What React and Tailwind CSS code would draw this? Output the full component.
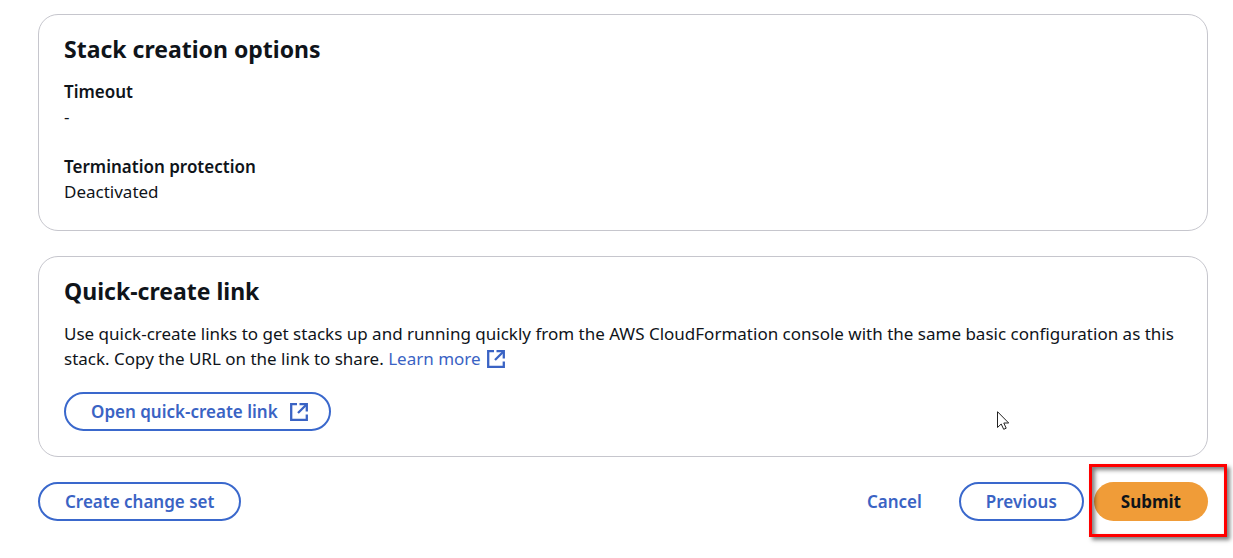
import React from "react";

function ExternalIcon({ className = "" }) {
  return (
    <svg viewBox="0 0 18 18" className={`inline-block size-[18px] shrink-0 ${className}`} fill="none" stroke="currentColor" strokeWidth="2.3" aria-hidden="true">
      <path d="M7 1.2H1.2V16.8H16.8V11.5" />
      <path d="M9.5 1.2H16.8V8.5" />
      <path d="M16.5 1.5L8 10" />
    </svg>
  );
}

function Card({ title, children }) {
  return (
    <section className="rounded-[20px] border border-[#c6c6cd] px-[25px] pt-[19px]">
      <h2 className="text-[23px] leading-[30px] font-bold">{title}</h2>
      {children}
    </section>
  );
}

const outline =
  "flex h-[39px] items-center rounded-full border-2 border-[#3a68cc] px-[25px] font-semibold text-[#3a63c4]";

export default function App() {
  return (
    <main className="relative bg-white pt-[14px] pr-[25px] pb-[37px] pl-[38px] font-['Noto_Sans',sans-serif] text-[17px] leading-[25px] text-[#0f141a]">
      <div className="flex flex-col gap-[25px]">
        <Card title="Stack creation options">
          <dl className="pt-[15px] pb-[26px]">
            <dt className="font-semibold">Timeout</dt>
            <dd className="mb-[25px]">-</dd>
            <dt className="font-semibold">Termination protection</dt>
            <dd>Deactivated</dd>
          </dl>
        </Card>
        <Card title="Quick-create link">
          <p className="pt-[15px]">
            Use quick-create links to get stacks up and running quickly from the AWS CloudFormation console with the same basic configuration as this
            stack. Copy the URL on the link to share.{" "}
            <a href="#learn-more" className="text-[#3a63c4]">
              Learn more
              <ExternalIcon className="ml-[6px] align-[-3px]" />
            </a>
          </p>
          <div className="mt-[21px] mb-[25px] flex">
            <a href="#quick-create" className={`${outline} gap-3`}>
              Open quick-create link
              <ExternalIcon className="-mr-1" />
            </a>
          </div>
        </Card>
      </div>
      <footer className="mt-[25px] flex items-center justify-between">
        <button type="button" className={outline}>Create change set</button>
        <div className="flex items-center gap-[10px]">
          <button type="button" className="h-[39px] px-[27px] font-semibold text-[#3a63c4]">Cancel</button>
          <button type="button" className={outline}>Previous</button>
          <div className="relative">
            <button type="button" className="h-[39px] rounded-full bg-[#f09c38] px-[27px] font-bold">Submit</button>
            <div className="pointer-events-none absolute -top-[18px] -right-[19px] -bottom-4 -left-[5px] border-3 border-[#ff0000] shadow-[3px_3px_4px_rgba(0,0,0,0.5),inset_3px_3px_4px_rgba(0,0,0,0.5)]" />
          </div>
        </div>
      </footer>
      <svg viewBox="0 0 14 20" className="pointer-events-none absolute top-[411px] left-[997px] h-5 w-[14px]" aria-hidden="true">
        <path d="M.5.7V16.5L4.2 13L6.7 18.3L9.2 17.2L6.8 12H11.7Z" fill="white" stroke="#222" />
      </svg>
    </main>
  );
}
